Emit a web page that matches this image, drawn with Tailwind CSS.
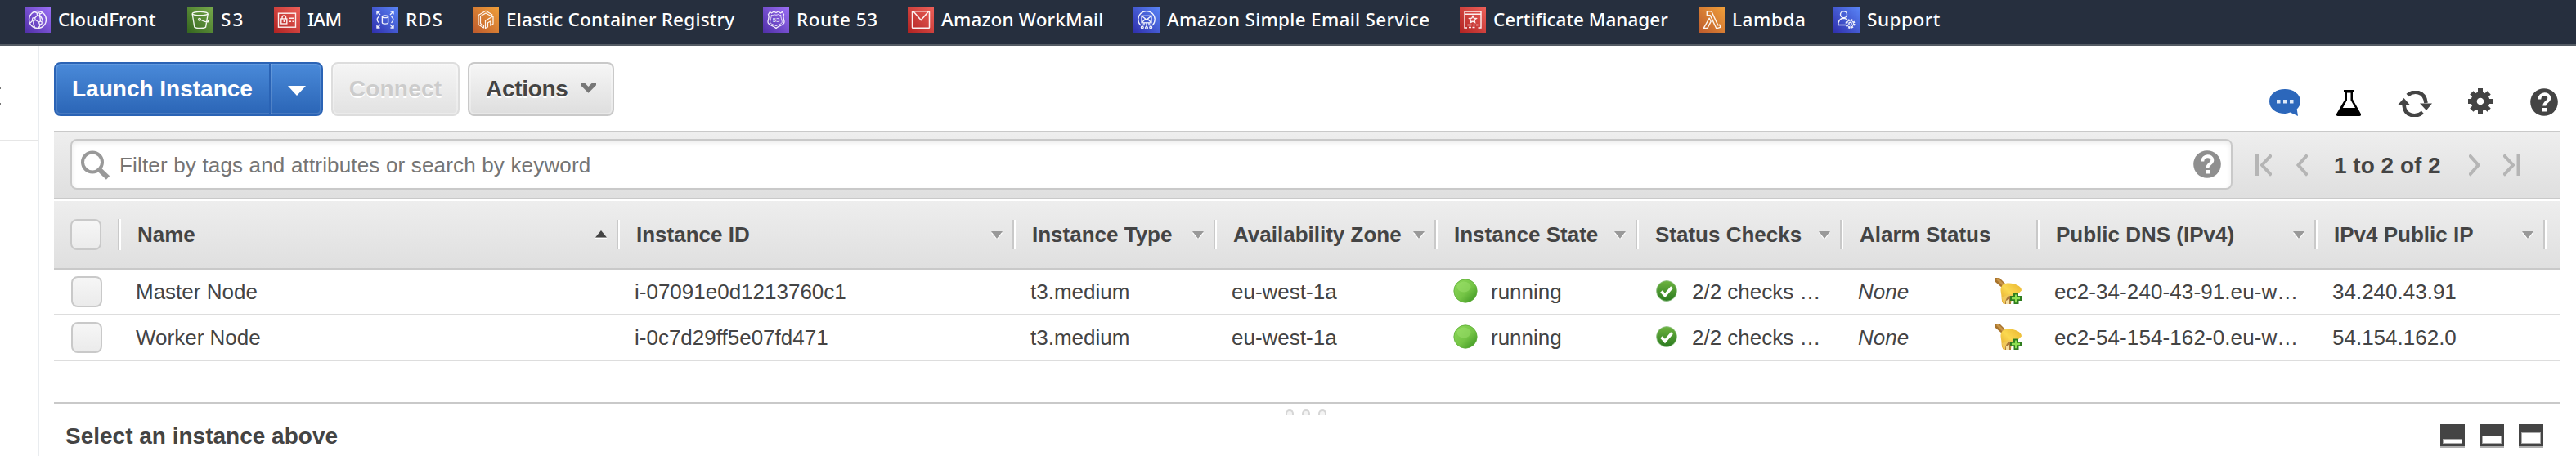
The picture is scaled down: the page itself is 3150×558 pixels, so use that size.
<!DOCTYPE html>
<html lang="en">
<head>
<meta charset="utf-8">
<title>EC2 Management Console</title>
<script src="https://cdn.jsdelivr.net/npm/@tailwindcss/browser@4"></script>
</head>
<body class="w-[3150px] h-[558px] overflow-hidden bg-white text-[#444] text-[26px] font-['Liberation_Sans',Arial,sans-serif]">

<svg class="absolute size-0">
  <defs>
    <linearGradient id="purple" x1="0" y1="1" x2="1" y2="0"><stop stop-color="#4f2ea6"/><stop offset="1" stop-color="#9c70f7"/></linearGradient>
    <linearGradient id="green" x1="0" y1="1" x2="1" y2="0"><stop stop-color="#34651e"/><stop offset="1" stop-color="#78ab4c"/></linearGradient>
    <linearGradient id="red" x1="0" y1="1" x2="1" y2="0"><stop stop-color="#b02221"/><stop offset="1" stop-color="#ee615a"/></linearGradient>
    <linearGradient id="blue" x1="0" y1="1" x2="1" y2="0"><stop stop-color="#2f2fac"/><stop offset="1" stop-color="#5a86f8"/></linearGradient>
    <linearGradient id="orange" x1="0" y1="1" x2="1" y2="0"><stop stop-color="#bd5a2c"/><stop offset="1" stop-color="#f0a03a"/></linearGradient>
    <linearGradient id="dot" x1="0" y1="0" x2="1" y2="1"><stop stop-color="#8ed95a"/><stop offset=".55" stop-color="#74c445"/><stop offset="1" stop-color="#368f1d"/></linearGradient>
    <linearGradient id="chk" x1="0" y1="0" x2="0" y2="1"><stop stop-color="#6db33f"/><stop offset="1" stop-color="#2b7a20"/></linearGradient>
    <linearGradient id="bellg" x1="0" y1="1" x2="1" y2="0"><stop stop-color="#e0a32a"/><stop offset=".5" stop-color="#fbd850"/><stop offset="1" stop-color="#e9b530"/></linearGradient>
  </defs>
  <symbol id="down" viewBox="0 0 16 12"><path d="M1 3h14L8 11.5z" fill="#fff"/><path d="M1 1h14L8 10z" fill="#999"/></symbol>
  <symbol id="running" viewBox="0 0 30 30"><circle cx="15" cy="15" r="14.2" fill="url(#dot)" stroke="#5fae3a" stroke-width=".8"/><ellipse cx="13" cy="10" rx="8.500" ry="6.500" fill="#a5e575" opacity=".4"/></symbol>
  <symbol id="ok" viewBox="0 0 26 28"><circle cx="13" cy="14" r="12.400" fill="url(#chk)" stroke="#8cbf80" stroke-width=".8"/><path d="M6.500 14.500l4.500 5 8.500-10" fill="none" stroke="#fff" stroke-width="3.600"/></symbol>
  <symbol id="bell" viewBox="0 0 32 32">
    <path d="M0 0h5l7 7-4 5L0 5z" fill="#a9742c"/>
    <path d="M3 0l8 8-2 2-8-8z" fill="#c99548"/>
    <path d="M12 7c6-1 11 0 15 2 3 1.500 5 3.500 5 6.500L15 32h-5c-3-3-2-8-3-13-.3-3-1-5 0-7 1-3 2.500-4 5-5z" fill="url(#bellg)"/>
    <path d="M8 24c1 4 1 6 3 8h8c0-4 2-8 6-11l-8-1z" fill="#f0c85a"/>
    <path d="M12 32c0-5 2-9 6-10l1 10z" fill="#a8773a"/><path d="M13 28l4-2v6h-4z" fill="#f5dfa0"/>
    <path d="M0 20h5.500c1.500 4 1.500 8 4 12H0z" fill="#fff"/>
    <path d="M22 18.500h6V22h4v6h-3.500v4h-6v-4H18v-6h4z" fill="#2f7d1f"/>
    <path d="M24 20.500h2.300v3.300H30v2.400h-3.700v4H24v-4h-4v-2.400h4z" fill="#8fe052"/>
  </symbol>
  <symbol id="help" viewBox="0 0 34 34"><circle cx="17" cy="17" r="16.800"/><path d="M11.300 13.500c0-8 12-8 12-1.500 0 4.500-6 4.500-6 9.500" fill="none" stroke="#fff" stroke-width="4"/><rect x="15" y="24" width="5" height="4.500" fill="#fff"/></symbol>
</svg>

<!-- Service shortcuts -->
<nav class="h-14 bg-[#262f3e] border-b-2 border-[#545b64] pl-[30px] pb-1.5 flex items-center text-white text-[22.500px] leading-[48px] font-medium font-['Noto_Sans',sans-serif] whitespace-nowrap">
  <a class="flex items-center gap-[9px] w-[199px] shrink-0">
    <svg class="size-8 shrink-0" viewBox="0 0 32 32"><rect width="32" height="32" fill="url(#purple)"/><g fill="none" stroke="#fff" stroke-width="1.300" stroke-opacity=".9"><circle cx="16" cy="16" r="10.500"/><circle cx="17" cy="9.500" r="1.800"/><circle cx="11.300" cy="15.500" r="1.800"/><circle cx="19.500" cy="20" r="1.800"/><path d="M15.700 10.800l-3.300 3.200M13 16.200l5 3M11 17.300c-.8 3 0 5.500 1.500 8M18.500 10.500c3 3 4.500 7 4 13M12 6.500c1.500.3 2.500 1 3.500 1.800M18.700 8.800l2.800-1M19.300 21.800c-.5 2-1.500 3.500-2.800 4.500M18.200 11.300c1 2 1.300 4.500 1.200 7M7 20l3-3"/></g></svg>
    CloudFront</a>
  <a class="flex items-center gap-[9px] w-[106px] shrink-0 tracking-[2px]">
    <svg class="size-8 shrink-0" viewBox="0 0 32 32"><rect width="32" height="32" fill="url(#green)"/><g fill="none" stroke="#fff" stroke-width="1.400" stroke-opacity=".92"><ellipse cx="15.700" cy="8.600" rx="9.500" ry="2.200"/><path d="M6.200 9l2.600 16c1.500 2 12.400 2 13.800 0l2.600-16M16 16c2.500 1.300 7 3.500 9.700 2.600 1-.5-.4-1.700-2-2.700"/><circle cx="15" cy="15.700" r="1.300"/></g></svg>
    S3</a>
  <a class="flex items-center gap-[9px] w-[120px] shrink-0 tracking-[-0.6px]">
    <svg class="size-8 shrink-0" viewBox="0 0 32 32"><rect width="32" height="32" fill="url(#red)"/><g fill="none" stroke="#fff" stroke-width="1.400" stroke-opacity=".92"><rect x="5.500" y="8.200" width="21" height="17"/><rect x="8.800" y="15" width="7" height="6"/><path d="M10 15v-1.500c0-3.300 4.600-3.300 4.600 0V15M19 14.300h5.500M19 18.200h2M22.500 18.200h2M12.300 17v2"/></g></svg>
    IAM</a>
  <a class="flex items-center gap-[9px] w-[123px] shrink-0 tracking-[0.9px]">
    <svg class="size-8 shrink-0" viewBox="0 0 32 32"><rect width="32" height="32" fill="url(#blue)"/><g fill="none" stroke="#fff" stroke-width="1.400" stroke-opacity=".92"><path d="M6 9.500V6h3.500M6 6l4 4M26 9.500V6h-3.500M26 6l-4 4M6 22.500V26h3.500M6 26l4-4M26 22.500V26h-3.500M26 26l-4-4"/><ellipse cx="16" cy="12.300" rx="3.600" ry="1.300"/><path d="M12.400 12.300v7.500c0 1.700 7.200 1.700 7.200 0v-7.500M8.500 12c-1.200 1-2.300 2.500-2.300 4s1 3 2.300 4M23.500 12c1.200 1 2.300 2.500 2.300 4s-1 3-2.300 4"/></g></svg>
    RDS</a>
  <a class="flex items-center gap-[9px] w-[355px] shrink-0 tracking-[0.2px]">
    <svg class="size-8 shrink-0" viewBox="0 0 32 32"><rect width="32" height="32" fill="url(#orange)"/><g fill="none" stroke="#fff" stroke-width="1.400" stroke-opacity=".92" stroke-linejoin="round"><path d="M13.500 26L7 22V10.500l9-5.300 8 4.800-2.200 1.300L16 8l-6.500 3.800v9L13.500 23z" stroke-width="1.200"/><path d="M15.500 26.500v-9.200l9.500-5.500v9.500l-3.200 2v-5.400l-3.300 1.900v5.200z" stroke-width="1.200"/></g></svg>
    Elastic Container Registry</a>
  <a class="flex items-center gap-[9px] w-[177px] shrink-0 tracking-[0.55px]">
    <svg class="size-8 shrink-0" viewBox="0 0 32 32"><rect width="32" height="32" fill="url(#purple)"/><g fill="none" stroke="#fff" stroke-width="1.300" stroke-opacity=".9"><path d="M8.500 6.500L10.500 8l2.800-2 2.700 1.500L18.700 6l2.800 2 2-1.500 2 3.200c-2 3 .5 6 .5 9 0 4.500-6.500 4-10 7.800C12.500 22.700 6 23.200 6 18.700c0-3 2.500-6 .5-9z"/><path d="M10 10.500c1.500.4 2.500.2 3.500-1 1.700 1 3.300 1 5 0 1 1.200 2 1.400 3.500 1-.6 3 1.300 5.200 1.300 8 0 3.300-4.500 2.900-7.300 5.400-2.800-2.500-7.300-2.100-7.300-5.400 0-2.800 1.900-5 1.300-8z" stroke-width=".9"/></g><text x="16" y="19" text-anchor="middle" fill="#fff" font-size="7.500" font-weight="400" letter-spacing="0" font-family="Liberation Sans">53</text></svg>
    Route 53</a>
  <a class="flex items-center gap-[9px] w-[276px] shrink-0 tracking-[0.2px]">
    <svg class="size-8 shrink-0" viewBox="0 0 32 32"><rect width="32" height="32" fill="url(#red)"/><g fill="none" stroke="#fff" stroke-width="1.500" stroke-opacity=".92"><rect x="5.500" y="5.700" width="21" height="20.600" rx=".8"/><path d="M7 6l9.200 10.500L25.500 6"/></g></svg>
    Amazon WorkMail</a>
  <a class="flex items-center gap-[9px] w-[399px] shrink-0 tracking-[0.3px]">
    <svg class="size-8 shrink-0" viewBox="0 0 32 32"><rect width="32" height="32" fill="url(#blue)"/><g fill="none" stroke="#fff" stroke-width="1.300" stroke-opacity=".92"><path d="M8.800 23A10.200 10.200 0 1 1 23.200 23"/><rect x="10" y="11.300" width="12" height="8.500"/><path d="M10.300 11.600l5.700 4.500 5.700-4.500M10.300 19.500l4-4M21.700 19.500l-4-4M16 20v5M13 20v2.500h-2.500V25M19 20v2.500h2.500V25"/><circle cx="16" cy="26" r="1.400"/><circle cx="10.800" cy="25.500" r="1.400"/><circle cx="21.200" cy="25.500" r="1.400"/></g></svg>
    Amazon Simple Email Service</a>
  <a class="flex items-center gap-[9px] w-[292px] shrink-0">
    <svg class="size-8 shrink-0" viewBox="0 0 32 32"><rect width="32" height="32" fill="url(#red)"/><g fill="none" stroke="#fff" stroke-width="1.400" stroke-opacity=".92"><path d="M9 26H6V6h20v20h-3.500M6 9.200h20M9.500 22.500h5M16.500 22.500h2M20 22.500h2.500M11 25.500h3M15.500 25.500h3"/><path d="M16 11.500l1.300 2.700 3 .4-2.200 2 .5 2.900-2.600-1.400-2.600 1.400.5-2.900-2.200-2 3-.4z"/></g></svg>
    Certificate Manager</a>
  <a class="flex items-center gap-[9px] w-[165px] shrink-0 tracking-[0.6px]">
    <svg class="size-8 shrink-0" viewBox="0 0 32 32"><rect width="32" height="32" fill="url(#orange)"/><path d="M10.300 5.700h5.500l8 17.200 2-.8 1 3.200-5 1.500-7.500-16.200h-4zM13.200 14.200l2 4-4.300 8.200H6.300z" fill="none" stroke="#fff" stroke-opacity=".92" stroke-width="1.400" stroke-linejoin="round"/></svg>
    Lambda</a>
  <a class="flex items-center gap-[9px] shrink-0 tracking-[0.5px]">
    <svg class="size-8 shrink-0" viewBox="0 0 32 32"><rect width="32" height="32" fill="url(#blue)"/><g fill="none" stroke="#fff" stroke-width="1.400" stroke-opacity=".92"><circle cx="12.500" cy="9.700" r="4"/><path d="M15 22.500H5.800c0-4.500 2-7.800 6.200-8.300 1.700 0 3 .5 4.300 1.600"/><circle cx="20.500" cy="21" r="1.700"/><circle cx="20.500" cy="21" r="5" stroke-width="2" stroke-dasharray="2.200 1.727"/><circle cx="20.500" cy="21" r="4" stroke-width="1"/></g></svg>
    Support</a>
</nav>

<div class="flex h-[502px]">
  <!-- Collapsed side navigation -->
  <aside class="w-12 shrink-0 border-r border-[#e9ecef] flex">
    <div class="w-full border-r border-[#c3c7cb]">
      <div class="h-[117px] border-b-2 border-[#e6e6e6] flex flex-col gap-[17px] pt-[50px]">
        <i class="block w-px h-[3px] bg-[#777]"></i>
        <i class="block w-px h-[3px] bg-[#777]"></i>
      </div>
    </div>
  </aside>

  <main class="ml-[18px] w-[3064px] shrink-0 flex flex-col">
    <!-- Action buttons -->
    <div class="h-[104px] pt-5 flex justify-between shrink-0">
      <div class="flex h-[66px] text-[28px] font-bold">
        <div class="flex w-[329px] rounded-lg border-2 border-[#2a63b5] bg-linear-to-b from-[#4a8ad9] to-[#2b65b6] text-white shadow-[inset_0_0_0_2px_rgba(255,255,255,0.13)] [text-shadow:0_2px_0_rgba(0,0,0,0.25)]">
          <button class="w-[263px] pl-5 text-left border-r-2 border-[#2a63b5]">Launch Instance</button>
          <button class="flex-1 flex items-center justify-center border-l-2 border-white/15"><svg class="w-[22px] h-3 mt-1" viewBox="0 0 22 12"><path d="M0 0h22L11 12z" fill="#fff"/></svg></button>
        </div>
        <button class="ml-2.5 w-[157px] rounded-lg border-2 border-[#ddd] bg-linear-to-b from-[#f5f5f5] to-[#e2e2e2] text-[#ccc] shadow-[inset_0_0_0_2px_rgba(255,255,255,0.3)] tracking-[0.2px] [text-shadow:0_2px_0_#fff]">Connect</button>
        <button class="ml-2.5 w-[179px] rounded-lg border-2 border-[#c9c9c9] bg-linear-to-b from-[#f6f6f6] to-[#dedede] pl-5 flex items-center gap-[15px] shadow-[inset_0_0_0_2px_rgba(255,255,255,0.3)] tracking-[-0.3px] [text-shadow:0_2px_0_#fff]">Actions
          <svg class="w-[19px] h-3.5 mb-1" viewBox="0 0 20 14"><path d="M0 1h5l5 5 5-5h5v3l-10 10L0 4z" fill="#777"/></svg></button>
      </div>
      <div class="flex h-[66px] pt-0.5">
        <svg class="w-[40px] h-[36px] mt-[29px] mr-[43px]" viewBox="0 0 40 36"><path d="M20 2c10.500 0 19 6 19 15 0 4-1.600 7-4.300 9.500L36 35l-9.500-4.600A26 26 0 0 1 20 32C9.500 32 1 26 1 17S9.500 2 20 2z" fill="#2c67bb"/><path d="M10 15h4.500v4.500H10zM18 15h4.500v4.500H18zM26 15h4.500v4.500H26z" fill="#dce8f8"/></svg>
        <svg class="w-[30px] h-8 mt-8 mr-[45px]" viewBox="0 0 30 32"><path d="M9 0h12.500v3H20v8.500l10 18c.5 1.500-.3 2.500-1.800 2.500H1.800C.3 32 -.5 31 0 29.500l10.500-18V3H9z" fill="#000"/><path d="M13 3.500h4.500v9L23 22H7.800L13 12.500z" fill="#fff"/></svg>
        <svg class="w-[42px] h-8 mt-[33px] mr-[44px]" viewBox="0 0 42 32"><g fill="none" stroke="#444" stroke-width="4.600"><path d="M12 5.500C19-.5 33-.5 34.500 15"/><path d="M30.500 26.500C23 32.500 8.500 32.500 7.500 17"/></g><path d="M27 15.500h15L35 24zM0 17.500h15L7.500 9z" fill="#444"/></svg>
        <svg class="w-[30px] h-8 mt-[30px] mr-[46px]" viewBox="0 0 30 32"><g fill="#444"><rect x="12" width="6" height="32"/><rect y="13" width="30" height="6"/><rect x="12" y="1" width="6" height="30" transform="rotate(45 15 16)"/><rect x="12" y="1" width="6" height="30" transform="rotate(-45 15 16)"/><circle cx="15" cy="16" r="11.500"/></g><circle cx="15" cy="16" r="4.300" fill="#fff"/></svg>
        <svg class="size-[34px] mt-[30px] mr-0.5 fill-[#444]"><use href="#help"/></svg>
      </div>
    </div>

    <!-- Filter and pager -->
    <div class="h-[84px] shrink-0 border-y-2 border-[#c9c9c9] bg-linear-to-b from-[#eee] to-[#dfdfdf] flex pl-5 pt-2">
      <div class="w-[2644px] h-[62px] rounded-lg border-2 border-[#c9c9c9] bg-white shadow-[inset_0_3px_6px_rgba(0,0,0,0.08)] flex items-center pl-[11px] pr-3 text-[#757575]">
        <svg class="size-9 mt-0.5" viewBox="0 0 36 36"><circle cx="14" cy="14.500" r="12" fill="none" stroke="#999" stroke-width="4"/><path d="M22.500 23.500l10.500 10" stroke="#999" stroke-width="6"/></svg>
        <span class="ml-[11px] flex-1 pt-0.5 tracking-[0.17px]">Filter by tags and attributes or search by keyword</span>
        <svg class="size-[34px] fill-[#8f8f8f]"><use href="#help"/></svg>
      </div>
      <div class="flex items-center h-16 text-[28px] font-bold whitespace-nowrap">
        <svg class="ml-7 w-5 h-7" viewBox="0 0 20 28"><path d="M2 1v26M19.500 1.500L8 14l11.500 12.500" fill="none" stroke="#b5b5b5" stroke-width="4"/></svg>
        <svg class="ml-[30px] w-3.5 h-7" viewBox="0 0 14 28"><path d="M13.500 1.500L2.500 14l11 12.500" fill="none" stroke="#b5b5b5" stroke-width="4"/></svg>
        <span class="ml-8 w-[132px] pt-0.5">1 to 2 of 2</span>
        <svg class="ml-[33px] w-3.5 h-7" viewBox="0 0 14 28"><path d="M.5 1.500L11.500 14l-11 12.500" fill="none" stroke="#b5b5b5" stroke-width="4"/></svg>
        <svg class="ml-7 w-5 h-7" viewBox="0 0 20 28"><path d="M18.500 1v26M.5 1.500L12 14 .5 26.500" fill="none" stroke="#b5b5b5" stroke-width="4"/></svg>
      </div>
    </div>

    <!-- Table header -->
    <div class="h-[86px] shrink-0 border-t-2 border-t-white border-b-2 border-b-[#c9c9c9] bg-linear-to-b from-[#eee] to-[#dfdfdf] bg-origin-border grid grid-cols-[78px_610px_484px_246px_270px_246px_250px_240px_340px_280px_20px] items-center font-bold whitespace-nowrap">
      <span class="ml-5 w-[38px] h-[38px] rounded-lg border-2 border-[#c9c9c9] bg-linear-to-b from-[#f6f6f6] to-[#ebebeb]"></span>
      <div class="flex items-center"><i class="w-1 h-[38px] border-l-2 border-[#c9c9c9] bg-white"></i><span class="ml-5 flex-1">Name</span><svg class="w-4 h-3 mr-[11px]" viewBox="0 0 16 12"><path d="M1 10h14v2H1z" fill="#fff"/><path d="M1 9.500h14L8 1z" fill="#444"/></svg></div>
      <div class="flex items-center"><i class="w-1 h-9 border-l-2 border-[#c9c9c9] bg-white"></i><span class="ml-5 flex-1">Instance ID</span><svg class="w-4 h-3 mr-[11px] mt-0.5"><use href="#down"/></svg></div>
      <div class="flex items-center"><i class="w-1 h-9 border-l-2 border-[#c9c9c9] bg-white"></i><span class="ml-5 flex-1">Instance Type</span><svg class="w-4 h-3 mr-[11px] mt-0.5"><use href="#down"/></svg></div>
      <div class="flex items-center"><i class="w-1 h-9 border-l-2 border-[#c9c9c9] bg-white"></i><span class="ml-5 flex-1">Availability Zone</span><svg class="w-4 h-3 mr-[11px] mt-0.5"><use href="#down"/></svg></div>
      <div class="flex items-center"><i class="w-1 h-9 border-l-2 border-[#c9c9c9] bg-white"></i><span class="ml-5 flex-1">Instance State</span><svg class="w-4 h-3 mr-[11px] mt-0.5"><use href="#down"/></svg></div>
      <div class="flex items-center"><i class="w-1 h-9 border-l-2 border-[#c9c9c9] bg-white"></i><span class="ml-5 flex-1">Status Checks</span><svg class="w-4 h-3 mr-[11px] mt-0.5"><use href="#down"/></svg></div>
      <div class="flex items-center"><i class="w-1 h-9 border-l-2 border-[#c9c9c9] bg-white"></i><span class="ml-5 flex-1">Alarm Status</span></div>
      <div class="flex items-center"><i class="w-1 h-9 border-l-2 border-[#c9c9c9] bg-white"></i><span class="ml-5 flex-1">Public DNS (IPv4)</span><svg class="w-4 h-3 mr-[11px] mt-0.5"><use href="#down"/></svg></div>
      <div class="flex items-center"><i class="w-1 h-9 border-l-2 border-[#c9c9c9] bg-white"></i><span class="ml-5 flex-1">IPv4 Public IP</span><svg class="w-4 h-3 mr-[11px] mt-0.5"><use href="#down"/></svg></div>
      <i class="w-1 h-9 border-l-2 border-[#c9c9c9] bg-white"></i>
    </div>

    <!-- Instances -->
    <div class="h-14 shrink-0 border-b-2 border-[#ddd] grid grid-cols-[78px_610px_484px_246px_270px_246px_250px_240px_340px_280px_20px] items-center whitespace-nowrap">
      <span class="ml-[21px] w-[38px] h-[38px] rounded-lg border-2 border-[#c9c9c9] bg-linear-to-b from-[#f6f6f6] to-[#ebebeb]"></span>
      <span class="pl-[22px]">Master Node</span>
      <span class="pl-[22px]">i-07091e0d1213760c1</span>
      <span class="pl-[22px]">t3.medium</span>
      <span class="pl-[22px]">eu-west-1a</span>
      <span class="pl-[23px] flex items-center gap-4"><svg class="size-[30px] mb-0.5"><use href="#running"/></svg>running</span>
      <span class="pl-[25px] flex items-center gap-[18px]"><svg class="w-[26px] h-7 mb-0.5"><use href="#ok"/></svg>2/2 checks …</span>
      <span class="pl-[22px] pr-[18px] flex items-center justify-between italic">None<svg class="size-8 mb-0.5"><use href="#bell"/></svg></span>
      <span class="pl-[22px] tracking-[0.1px]">ec2-34-240-43-91.eu-w…</span>
      <span class="pl-[22px]">34.240.43.91</span>
    </div>
    <div class="h-14 shrink-0 border-b-2 border-[#ddd] grid grid-cols-[78px_610px_484px_246px_270px_246px_250px_240px_340px_280px_20px] items-center whitespace-nowrap">
      <span class="ml-[21px] w-[38px] h-[38px] rounded-lg border-2 border-[#c9c9c9] bg-linear-to-b from-[#f6f6f6] to-[#ebebeb]"></span>
      <span class="pl-[22px]">Worker Node</span>
      <span class="pl-[22px]">i-0c7d29ff5e07fd471</span>
      <span class="pl-[22px]">t3.medium</span>
      <span class="pl-[22px]">eu-west-1a</span>
      <span class="pl-[23px] flex items-center gap-4"><svg class="size-[30px] mb-0.5"><use href="#running"/></svg>running</span>
      <span class="pl-[25px] flex items-center gap-[18px]"><svg class="w-[26px] h-7 mb-0.5"><use href="#ok"/></svg>2/2 checks …</span>
      <span class="pl-[22px] pr-[18px] flex items-center justify-between italic">None<svg class="size-8 mb-0.5"><use href="#bell"/></svg></span>
      <span class="pl-[22px] tracking-[0.1px]">ec2-54-154-162-0.eu-w…</span>
      <span class="pl-[22px]">54.154.162.0</span>
    </div>

    <!-- Details pane -->
    <div class="mt-[50px] border-t-2 border-[#c9c9c9] flex flex-col">
      <div class="flex gap-2.5 mt-[7px] ml-[1506px] h-[7px]">
        <i class="w-2.5 h-[7px] rounded-t-full border-2 border-b-0 border-[#d6d6d6] bg-[#f4f4f4]"></i>
        <i class="w-2.5 h-[7px] rounded-t-full border-2 border-b-0 border-[#d6d6d6] bg-[#f4f4f4]"></i>
        <i class="w-2.5 h-[7px] rounded-t-full border-2 border-b-0 border-[#d6d6d6] bg-[#f4f4f4]"></i>
      </div>
      <div class="flex justify-between items-start pl-3.5 pr-5 pt-2">
        <h2 class="text-[28px] leading-9 font-bold">Select an instance above</h2>
        <div class="flex gap-[18px] pt-[3px]">
          <span class="w-[30px] h-[29px] bg-[#444] border-b-2 border-[#b0b0b0] flex items-end px-[3px] pb-[3px]"><i class="w-full h-1.5 border border-[#aaa] bg-white"></i></span>
          <span class="w-[30px] h-[29px] bg-[#444] border-b-2 border-[#b0b0b0] flex items-end px-[3px] pb-[3px]"><i class="w-full h-[10px] border border-[#aaa] bg-white"></i></span>
          <span class="w-[30px] h-[29px] bg-[#444] border-b-2 border-[#b0b0b0] flex items-end px-[3px] pb-[3px]"><i class="w-full h-[14px] border border-[#aaa] bg-white"></i></span>
        </div>
      </div>
    </div>
  </main>
</div>
</body>
</html>
